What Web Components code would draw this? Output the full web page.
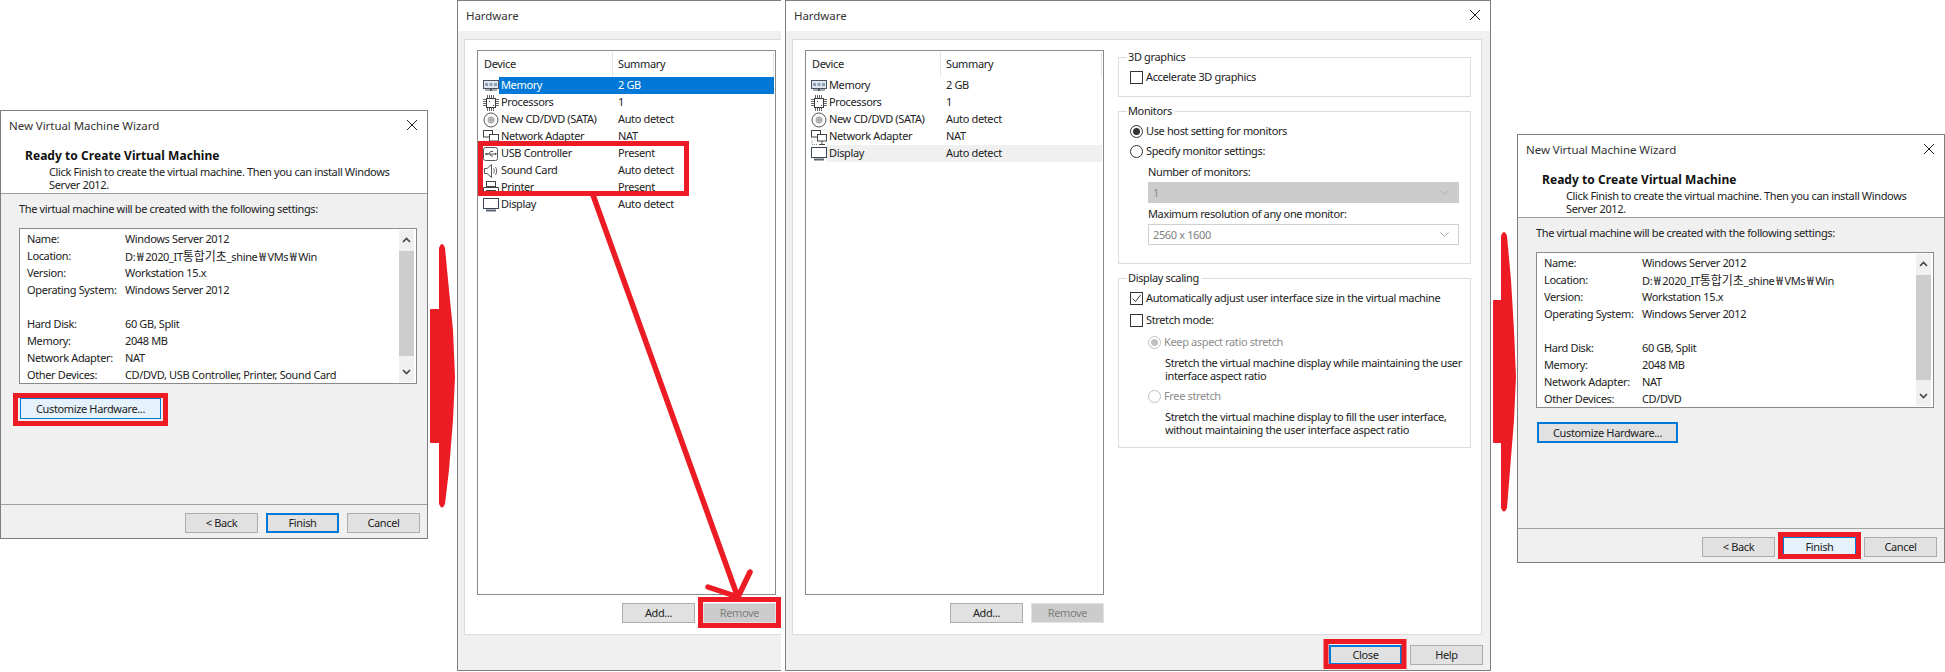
<!doctype html>
<html lang="ko"><head><meta charset="utf-8"><title>VM Hardware</title>
<style>
html,body{margin:0;padding:0;background:#fff}
body{width:1945px;height:672px;position:relative;overflow:hidden;font:11px/13px "Noto Sans","Noto Sans CJK KR",sans-serif;letter-spacing:-.36px;color:#222}
</style></head><body>

<vm-window style="--x:0px;--y:110px;--w:428px;--h:429px" heading="New Virtual Machine Wizard" closable>
  <wizard-page devices="CD/DVD, USB Controller, Printer, Sound Card" custom="hover" finish="default"></wizard-page>
</vm-window>

<vm-window style="--x:457px;--y:0px;--w:324px;--h:671px" heading="Hardware" cut>
  <hardware-page variant="a"><device-list slot="list">
    <device-row icon="memory" name="Memory" value="2 GB" state="selected"></device-row>
    <device-row icon="cpu" name="Processors" value="1"></device-row>
    <device-row icon="cd" name="New CD/DVD (SATA)" value="Auto detect"></device-row>
    <device-row icon="net" name="Network Adapter" value="NAT"></device-row>
    <device-row icon="usb" name="USB Controller" value="Present"></device-row>
    <device-row icon="sound" name="Sound Card" value="Auto detect"></device-row>
    <device-row icon="printer" name="Printer" value="Present"></device-row>
    <device-row icon="display" name="Display" value="Auto detect"></device-row>
  </device-list></hardware-page>
</vm-window>

<vm-window style="--x:785px;--y:0px;--w:706px;--h:671px" heading="Hardware" closable>
  <hardware-page variant="b" footer>
    <device-list slot="list">
      <device-row icon="memory" name="Memory" value="2 GB"></device-row>
      <device-row icon="cpu" name="Processors" value="1"></device-row>
      <device-row icon="cd" name="New CD/DVD (SATA)" value="Auto detect"></device-row>
      <device-row icon="net" name="Network Adapter" value="NAT"></device-row>
      <device-row icon="display" name="Display" value="Auto detect" state="inactive"></device-row>
    </device-list>
    <display-settings slot="side"></display-settings>
  </hardware-page>
</vm-window>

<vm-window style="--x:1517px;--y:134px;--w:428px;--h:429px" heading="New Virtual Machine Wizard" closable>
  <wizard-page devices="CD/DVD" custom="default" finish="hover"></wizard-page>
</vm-window>

<red-annotations></red-annotations>

<script>
function shadow(el,html){el.attachShadow({mode:'open'}).innerHTML=html;return el.shadowRoot}

customElements.define('vm-window',class extends HTMLElement{
  connectedCallback(){
    const x=this.hasAttribute('closable')?`<svg class="x" width="12" height="12" viewBox="0 0 12 12"><path d="M1 1L11 11M11 1L1 11" stroke="#222" stroke-width="1" fill="none"/></svg>`:'';
    shadow(this,`<style>
      :host{position:absolute;left:var(--x);top:var(--y);width:var(--w);height:var(--h);box-sizing:border-box;display:flex;flex-direction:column;background:#f0f0f0;border:1px solid #7f7f7f;color:#222}
      :host([cut]){border-right:0}
      .bar{flex:0 0 30px;box-sizing:border-box;background:#fff;display:flex;align-items:center;justify-content:space-between;padding:0 9px 2px 8px;color:#333;font-size:11.5px;letter-spacing:-.05px}
      .x{display:block}
      .body{flex:1;min-height:0;display:flex;flex-direction:column}
      </style><div class="bar"><span>${this.getAttribute('heading')}</span>${x}</div><div class="body"><slot></slot></div>`);
  }
});

customElements.define('vm-button',class extends HTMLElement{
  connectedCallback(){
    shadow(this,`<style>
      :host{display:flex;align-items:center;justify-content:center;box-sizing:border-box;width:var(--bw,73px);height:var(--bh,20px);padding-bottom:1px;background:#e1e1e1;border:1px solid #adadad;color:#222;flex:none}
      :host([kind=default]){border:2px solid #0078d7}
      :host([kind=hover]){background:#e5f1fb;border:1px solid #0078d7}
      :host([kind=disabled]){background:#cccccc;border-color:#e2e2e2;color:#808080}
      </style><slot></slot>`);
  }
});

customElements.define('wizard-page',class extends HTMLElement{
  connectedCallback(){
    const W='<i class="w">₩</i>';
    const loc=`D:${W}2020_IT<i class="k">통합기초</i>_shine${W}VMs${W}Win`;
    const rows=[['Name:','Windows Server 2012'],['Location:',loc],['Version:','Workstation 15.x'],['Operating System:','Windows Server 2012'],['',''],['Hard Disk:','60 GB, Split'],['Memory:','2048 MB'],['Network Adapter:','NAT'],['Other Devices:',this.getAttribute('devices')]];
    shadow(this,`<style>
      :host{display:flex;flex-direction:column;flex:1;min-height:0}
      .head{background:#fff;height:53px;border-bottom:1px solid #a0a0a0;padding:8px 0 0 24px;box-sizing:border-box}
      .head b{display:block;font-weight:700;font-size:12px;line-height:14px;color:#111;letter-spacing:.05px}
      .head p{margin:2px 0 0 24px;line-height:13px;width:350px}
      .mid{flex:1;padding:8px 9px 0 18px;display:flex;flex-direction:column}
      .intro{line-height:14px}
      .list{margin-top:12px;height:156px;width:398px;box-sizing:border-box;border:1px solid #8a8a8a;background:#fff;display:flex}
      .rows{flex:1;padding:2px 0 0 7px;display:grid;grid-template-columns:98px 1fr;grid-auto-rows:17px;align-items:start;overflow:hidden}
      .rows span{white-space:nowrap;height:17px;line-height:15px}
      .w,.k{font-style:normal;font-family:"Noto Sans CJK KR",sans-serif;letter-spacing:0}
      .w{display:inline-block;width:10px;text-align:center;font-size:12px}
      .k{font-size:12px}
      .sb{width:15px;margin:1px 2px 1px 0;background:#f0f0f0;display:flex;flex-direction:column;align-items:center;justify-content:space-between}
      .sb svg{display:block;margin:7px 0}
      .thumb{flex:1;align-self:stretch;display:flex;flex-direction:column}
      .thumb i{display:block;background:#cdcdcd;height:105px;margin-top:1px}
      vm-button.cz{margin-top:14px;--bw:141px;--bh:21px}
      .cz-wrap{margin-left:1px}
      .foot{flex:0 0 34px;border-top:1px solid #a0a0a0;display:flex;justify-content:flex-end;gap:8px;padding:8px 7px 0 0;box-sizing:border-box}
      </style>
      <div class="head"><b>Ready to Create Virtual Machine</b><p>Click Finish to create the virtual machine. Then you can install Windows Server 2012.</p></div>
      <div class="mid"><div class="intro">The virtual machine will be created with the following settings:</div>
        <div class="list"><div class="rows">${rows.map(r=>`<span>${r[0]}</span><span>${r[1]}</span>`).join('')}</div>
        <div class="sb"><svg width="9" height="6" viewBox="0 0 9 6"><path d="M1 5L4.5 1.5L8 5" stroke="#444" stroke-width="1.6" fill="none"/></svg><div class="thumb"><i></i></div><svg width="9" height="6" viewBox="0 0 9 6"><path d="M1 1L4.5 4.5L8 1" stroke="#444" stroke-width="1.6" fill="none"/></svg></div></div>
        <div class="cz-wrap"><vm-button class="cz" kind="${this.getAttribute('custom')}">Customize Hardware...</vm-button></div>
      </div>
      <div class="foot"><vm-button>&lt; Back</vm-button><vm-button kind="${this.getAttribute('finish')}">Finish</vm-button><vm-button>Cancel</vm-button></div>`);
  }
});

customElements.define('hardware-page',class extends HTMLElement{
  connectedCallback(){
    const b=this.getAttribute('variant')==='b';
    shadow(this,`<style>
      :host{display:flex;flex-direction:column;flex:1;min-height:0}
      .panel{margin:8px ${b?'8px':'0'} 0 6px;height:596px;box-sizing:border-box;background:#fff;border:1px solid #dcdcdc;${b?'':'border-right:0;'}padding:10px 0 0 12px;display:flex;gap:14px}
      .left{width:299px;flex:none;display:flex;flex-direction:column}
      .btns{display:flex;justify-content:flex-end;gap:8px;margin-top:8px}
      .foot{display:flex;justify-content:flex-end;gap:8px;padding:10px 7px 0 0}
      ::slotted(device-list){height:545px}
      </style>
      <div class="panel"><div class="left"><slot name="list"></slot>
        <div class="btns"><vm-button>Add...</vm-button><vm-button kind="disabled">Remove</vm-button></div></div>
        <slot name="side"></slot></div>
      ${b?'<div class="foot"><vm-button kind="default">Close</vm-button><vm-button>Help</vm-button></div>':''}`);
  }
});

customElements.define('device-list',class extends HTMLElement{
  connectedCallback(){
    shadow(this,`<style>
      :host{display:block;box-sizing:border-box;border:1px solid #8a8a8a;background:#fff}
      .hd{height:25px;display:grid;grid-template-columns:135px 1fr;align-items:center;margin:1px 1px 0 0;box-sizing:border-box}
      .hd span{padding-left:6px;height:25px;line-height:23px;border-right:1px solid #e5e5e5}
      .hd span+span{padding-left:5px}
      .rows{padding-right:1px}
      </style><div class="hd"><span>Device</span><span>Summary</span></div><div class="rows"><slot></slot></div>`);
  }
});

const ICONS={
 memory:`<rect x=".5" y="2.5" width="15" height="8" fill="#dfe6ee" stroke="#4a5563"/><path d="M2 5h3v3H2zM6.5 5h3v3h-3zM11 5h3v3h-3z" fill="#8fa3b8"/><path d="M2 12h12" stroke="#4a5563"/><path d="M7 11h2v2H7z" fill="#4a5563"/>`,
 cpu:`<rect x="3.5" y="3.5" width="9" height="9" fill="#fff" stroke="#3c3c3c"/><path d="M6 6h1v1H6zM10 10h1v1h-1z" fill="#3c3c3c"/><path d="M0 4.5h3M0 6.5h3M0 8.5h3M0 10.5h3M13 4.5h3M13 6.5h3M13 8.5h3M13 10.5h3M4.5 0v3M6.5 0v3M8.5 0v3M10.5 0v3M4.5 13v3M6.5 13v3M8.5 13v3M10.5 13v3" stroke="#666"/>`,
 cd:`<circle cx="8" cy="8" r="7" fill="#fafafa" stroke="#555"/><circle cx="8" cy="8" r="3" fill="#dcdcdc" stroke="#999"/><circle cx="8" cy="8" r="1.2" fill="#fff" stroke="#555" stroke-width=".7"/>`,
 net:`<rect x=".5" y="1.5" width="9" height="6.5" fill="#fff" stroke="#444"/><rect x="6.5" y="5.5" width="9" height="6.5" fill="#fff" stroke="#444"/><path d="M11 12v3M8 15.5h6" stroke="#444"/><path d="M1 11.5v4h5" stroke="#888" stroke-dasharray="1 1" fill="none"/>`,
 usb:`<rect x=".5" y="1.5" width="14" height="13" rx="2" fill="#fff" stroke="#555"/><path d="M3 8h9" stroke="#555"/><path d="M12 6.500l2 1.500-2 1.500z" fill="#555"/><path d="M5.5 8l2-2.500H10M6.5 8l1.500 2h2" stroke="#555" fill="none"/><circle cx="3.5" cy="8" r="1.2" fill="#555"/>`,
 sound:`<path d="M1.5 5.5h2.500L8.500 1.500v13l-4.500-4H1.500z" fill="#fff" stroke="#555"/><path d="M10.5 5.5c1 1.500 1 3.500 0 5M12.5 4c1.500 2.500 1.500 5.500 0 8" stroke="#666" fill="none"/>`,
 printer:`<rect x="3.5" y="1.5" width="9" height="5" fill="#fff" stroke="#444"/><path d="M.5 7.5h15v5h-15z" fill="#fff" stroke="#444"/><rect x="3.5" y="10.5" width="9" height="4.500" fill="#fff" stroke="#444"/>`,
 display:`<rect x=".5" y="1.5" width="15" height="10" fill="#fff" stroke="#3b4654"/><path d="M3 13.5h10" stroke="#5a6572" stroke-width="2"/>`};

customElements.define('device-row',class extends HTMLElement{
  connectedCallback(){
    shadow(this,`<style>
      :host{display:grid;grid-template-columns:21px 114px 1fr;height:17px;align-items:stretch;line-height:15px;white-space:nowrap}
      .ic{padding-left:5px;display:flex;align-items:center}
      svg{display:block;flex:none}
      span{display:block}
      .n{padding-left:2px}
      .v{padding-left:5px}
      :host([state=selected]) .n,:host([state=selected]) .v{background:#0078d7;color:#fff}
      :host([state=inactive]) .n,:host([state=inactive]) .v{background:#f0f0f0}
      </style><div class="ic"><svg width="16" height="16" viewBox="0 0 16 16">${ICONS[this.getAttribute('icon')]}</svg></div><span class="n">${this.getAttribute('name')}</span><span class="v">${this.getAttribute('value')}</span>`);
  }
});

customElements.define('group-box',class extends HTMLElement{
  connectedCallback(){
    shadow(this,`<style>
      :host{display:block;height:var(--gh);box-sizing:border-box}
      fieldset{margin:0;height:100%;box-sizing:border-box;border:1px solid #dcdcdc;padding:0 0 0 11px;min-width:0}
      legend{padding:0 3px 0 1px;margin-left:-3px;line-height:14px;height:14px}
      </style><fieldset><legend>${this.getAttribute('label')}</legend><slot></slot></fieldset>`);
  }
});

customElements.define('vm-check',class extends HTMLElement{
  connectedCallback(){
    const dis=this.hasAttribute('disabled');
    const chk=this.hasAttribute('checked');
    let m;
    if(this.getAttribute('type')==='radio'){
      m=`<svg width="13" height="13" viewBox="0 0 13 13"><circle cx="6.5" cy="6.5" r="6" fill="#fff" stroke="${dis?'#bfbfbf':'#333'}"/>${chk?`<circle cx="6.5" cy="6.5" r="3.5" fill="${dis?'#bfbfbf':'#333'}"/>`:''}</svg>`;
    }else{
      m=`<svg width="13" height="13" viewBox="0 0 13 13"><rect x=".5" y=".5" width="12" height="12" fill="#fff" stroke="#333"/>${chk?`<path d="M2.5 6.5l3 3 5-6.500" stroke="#333" fill="none"/>`:''}</svg>`;
    }
    shadow(this,`<style>
      :host{display:flex;align-items:center;gap:3px;height:20px;white-space:nowrap;color:${dis?'#8c8c8c':'inherit'}}
      svg{display:block;flex:none}
      span{padding-bottom:1px}
      </style>${m}<span><slot></slot></span>`);
  }
});

customElements.define('vm-combo',class extends HTMLElement{
  connectedCallback(){
    shadow(this,`<style>
      :host{display:flex;align-items:center;justify-content:space-between;box-sizing:border-box;width:311px;height:21px;padding:0 9px 0 4px;background:#fff;border:1px solid #d0d0d0;color:#808080}
      :host([disabled]){background:#cccccc;border-color:#cccccc;color:#8c8c8c}
      svg{display:block}
      </style><span><slot></slot></span><svg width="9" height="5" viewBox="0 0 9 5"><path d="M.5 .5L4.5 4.5L8.5 .5" stroke="#aaa" fill="none"/></svg>`);
  }
});

customElements.define('display-settings',class extends HTMLElement{
  connectedCallback(){
    shadow(this,`<style>
      :host{display:flex;flex-direction:column;gap:7px;width:353px;flex:none}
      .in{padding-left:18px}
      .lbl{height:20px;line-height:20px}
      .d{margin:0 0 0 35px;line-height:13px;width:310px}
      .p3{padding-top:3px}
      </style>
      <group-box label="3D graphics" style="--gh:47px"><div class="p3"><vm-check>Accelerate 3D graphics</vm-check></div></group-box>
      <group-box label="Monitors" style="--gh:160px"><div class="p3">
        <vm-check type="radio" checked>Use host setting for monitors</vm-check>
        <vm-check type="radio">Specify monitor settings:</vm-check>
        <div class="in"><div class="lbl" style="margin-top:1px">Number of monitors:</div><vm-combo disabled>1</vm-combo>
        <div class="lbl" style="margin-top:1px">Maximum resolution of any one monitor:</div><vm-combo>2560 x 1600</vm-combo></div></div></group-box>
      <group-box label="Display scaling" style="--gh:177px"><div class="p3">
        <vm-check checked>Automatically adjust user interface size in the virtual machine</vm-check>
        <vm-check style="margin-top:2px">Stretch mode:</vm-check>
        <div class="in" style="margin-top:2px"><vm-check type="radio" checked disabled>Keep aspect ratio stretch</vm-check></div>
        <p class="d" style="margin-top:4px">Stretch the virtual machine display while maintaining the user interface aspect ratio</p>
        <div class="in" style="margin-top:4px"><vm-check type="radio" disabled>Free stretch</vm-check></div>
        <p class="d" style="margin-top:4px">Stretch the virtual machine display to fill the user interface, without maintaining the user interface aspect ratio</p>
      </div></group-box>`);
  }
});

customElements.define('red-annotations',class extends HTMLElement{
  connectedCallback(){
    const R='#ed1c24';
    shadow(this,`<style>:host{position:absolute;left:0;top:0;width:1945px;height:672px;pointer-events:none}svg{display:block}</style>
    <svg width="1945" height="672" viewBox="0 0 1945 672" fill="none" stroke="${R}">
      <rect x="15.5" y="395.5" width="150" height="28" stroke-width="5"/>
      <rect x="480.5" y="143.5" width="206" height="50" stroke-width="5"/>
      <rect x="700.5" y="599.5" width="78" height="26" stroke-width="5"/>
      <rect x="1326" y="641.5" width="78" height="25" stroke-width="5"/>
      <rect x="1780.5" y="534.5" width="78" height="22" stroke-width="5"/>
      <path d="M593 195L737 595M708 587L738 597L750 572" stroke-width="5.5" stroke-linecap="round" stroke-linejoin="round"/>
      <path d="M439 248Q442 240 445 248L449 290L453 330L455 377L453 420L449 470L445 504Q442 511 439 504V443H431Q430 443 430 442V310Q430 309 431 309H439Z" fill="${R}" stroke="none"/>
      <path d="M1501 236Q1504 228 1507 236L1511 280L1514 330L1516 377L1514 420L1510 470L1507 508Q1504 515 1501 508V443H1494Q1493 443 1493 442V301Q1493 300 1494 300H1501Z" fill="${R}" stroke="none"/>
    </svg>`);
  }
});
</script>
</body></html>
